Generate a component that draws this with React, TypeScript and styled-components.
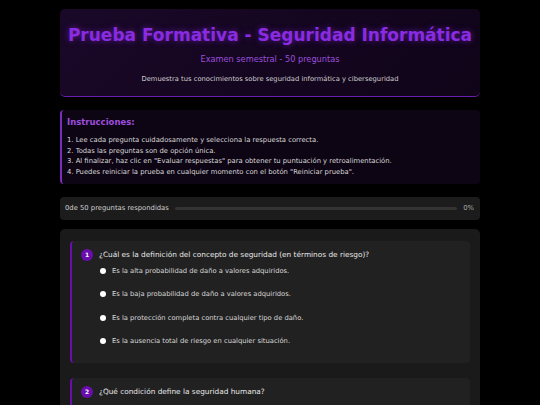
import React from 'react'
import styled, {createGlobalStyle} from 'styled-components'

const GlobalStyle = createGlobalStyle`
  html, body {
    margin: 0;
    padding: 0;
    background: #000;
    color: #e0e0e0;
    font-family: "DejaVu Sans", Verdana, sans-serif;
  }
`

const Page = styled.div`
  width: 420px;
  margin: 0 auto;
  padding: 9px 0 20px;
  display: flex;
  flex-direction: column;
  gap: 13px;
`

const Header = styled.header`
  background: linear-gradient(135deg, #1a0828 0%, #0f0418 100%);
  border-radius: 5px;
  border-bottom: 1px solid #6a1fb0;
  padding: 15px 6px 13px;
  text-align: center;
`

const Title = styled.h1`
  margin: 0;
  font-size: 17px;
  font-weight: bold;
  color: #8a2be2;
  text-shadow: 0 0 6px rgba(138, 43, 226, 0.6);
  line-height: 22px;
  white-space: nowrap;
`

const Subtitle = styled.p`
  margin: 8px 0 0;
  font-size: 8.2px;
  line-height: 10px;
  color: #9d4edd;
`

const Description = styled.p`
  margin: 11px 0 0;
  font-size: 6.75px;
  line-height: 8px;
  color: #d0d0d0;
`

const Instructions = styled.section`
  background: #0d0514;
  border-left: 2px solid #7b2cbf;
  border-radius: 4px;
  padding: 6px 5px 6px;
`

const InstrTitle = styled.h3`
  margin: 0 0 7px;
  font-size: 8.5px;
  font-weight: bold;
  color: #9d4edd;
  line-height: 12px;
`

const InstrList = styled.ol`
  margin: 0;
  padding: 0;
  list-style: none;
  font-size: 6.8px;
  line-height: 10.7px;
  color: #d8d8d8;
`

const Progress = styled.div`
  background: #1c1c1c;
  border-radius: 4px;
  height: 23px;
  padding: 0 6px 0 5px;
  display: flex;
  align-items: center;
  gap: 6px;
  font-size: 6.8px;
  color: #d0d0d0;
`

const Track = styled.div`
  flex: 1;
  height: 3px;
  border-radius: 2px;
  background: #333;
`

const Fill = styled.div`
  height: 100%;
  border-radius: 2px;
  background: #8a2be2;
`

const Percent = styled.span`
  color: #aaa;
`

const Questions = styled.div`
  background: #1a1a1a;
  border-radius: 5px;
  padding: 12px 10px 11px;
  display: flex;
  flex-direction: column;
  gap: 15px;
  margin-top: -4px;
`

const Card = styled.div`
  background: #212121;
  border-left: 2px solid #6a0dad;
  border-radius: 4px;
  padding: 8px 9px 10px;
`

const QHead = styled.div`
  display: flex;
  align-items: center;
  gap: 6px;
  font-size: 7.35px;
  color: #e8e8e8;
`

const Badge = styled.span`
  width: 12px;
  height: 12px;
  border-radius: 50%;
  background: #6a0dad;
  color: #fff;
  font-size: 6px;
  font-weight: bold;
  display: flex;
  align-items: center;
  justify-content: center;
  flex-shrink: 0;
`

const Options = styled.div`
  display: flex;
  flex-direction: column;
  padding-left: 19px;
  margin-top: -2px;
`

const Option = styled.label`
  display: flex;
  align-items: center;
  gap: 6px;
  height: 23.5px;
  font-size: 6.75px;
  color: #d8d8d8;
`

const Radio = styled.span`
  width: 6px;
  height: 6px;
  border-radius: 50%;
  background: #fff;
  flex-shrink: 0;
`

const questions = [
  {
    q: '¿Cuál es la definición del concepto de seguridad (en términos de riesgo)?',
    options: [
      'Es la alta probabilidad de daño a valores adquiridos.',
      'Es la baja probabilidad de daño a valores adquiridos.',
      'Es la protección completa contra cualquier tipo de daño.',
      'Es la ausencia total de riesgo en cualquier situación.',
    ],
  },
  {
    q: '¿Qué condición define la seguridad humana?',
    options: [
      'Vivir libre de temor y libre de necesidad.',
      'Tener acceso ilimitado a recursos.',
      'Contar con protección militar permanente.',
      'No depender de ninguna institución.',
    ],
  },
]

const steps = [
  '1. Lee cada pregunta cuidadosamente y selecciona la respuesta correcta.',
  '2. Todas las preguntas son de opción única.',
  '3. Al finalizar, haz clic en "Evaluar respuestas" para obtener tu puntuación y retroalimentación.',
  '4. Puedes reiniciar la prueba en cualquier momento con el botón "Reiniciar prueba".',
]

export default function App() {
  const answered = 0
  const total = 50
  const pct = Math.round((answered / total) * 100)

  return (
    <>
      <GlobalStyle />
      <Page>
        <Header>
          <Title>Prueba Formativa - Seguridad Informática</Title>
          <Subtitle>Examen semestral - 50 preguntas</Subtitle>
          <Description>Demuestra tus conocimientos sobre seguridad informática y ciberseguridad</Description>
        </Header>

        <Instructions>
          <InstrTitle>Instrucciones:</InstrTitle>
          <InstrList>
            {steps.map((s) => (
              <li key={s}>{s}</li>
            ))}
          </InstrList>
        </Instructions>

        <Progress>
          <span>{answered}de {total} preguntas respondidas</span>
          <Track>
            <Fill style={{width: `${pct}%`}} />
          </Track>
          <Percent>{pct}%</Percent>
        </Progress>

        <Questions>
          {questions.map((item, i) => (
            <Card key={i}>
              <QHead>
                <Badge>{i + 1}</Badge>
                <span>{item.q}</span>
              </QHead>
              <Options>
                {item.options.map((o) => (
                  <Option key={o}>
                    <Radio />
                    {o}
                  </Option>
                ))}
              </Options>
            </Card>
          ))}
        </Questions>
      </Page>
    </>
  )
}
